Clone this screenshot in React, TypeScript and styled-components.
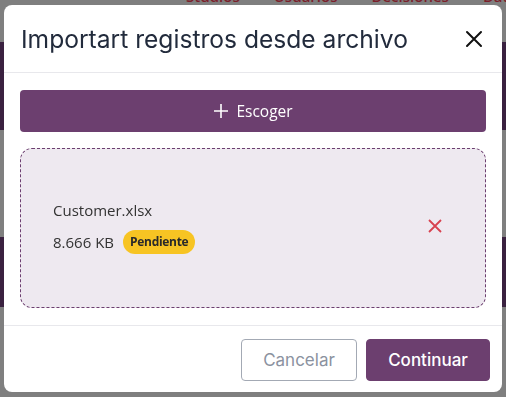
import React from 'react';
import styled, { createGlobalStyle } from 'styled-components';

const GlobalStyle = createGlobalStyle`
  html, body {
    margin: 0;
    padding: 0;
    background: #7f7f7f;
    overflow: hidden;
  }
  * { box-sizing: border-box; }
`;

const Page = styled.div`
  width: 506px;
  height: 397px;
  display: flex;
  flex-direction: column;
  background: #7f7f7f;
`;

const TopNav = styled.div`
  height: 42px;
  flex-shrink: 0;
  display: flex;
  align-items: flex-start;
  gap: 34px;
  padding-left: 186px;
  font-family: 'Open Sans', sans-serif;
  font-size: 15px;
  font-weight: 600;
  color: #7c1f2b;
  white-space: nowrap;
  overflow: hidden;
`;

const NavItem = styled.span`
  margin-top: -14px;
  line-height: 20px;
`;

const Band = styled.div<{ $h: number; $dark?: boolean }>`
  height: ${p => p.$h}px;
  flex-shrink: 0;
  background: ${p => (p.$dark ? '#3a2140' : '#7f7f7f')};
`;

const Modal = styled.div`
  position: fixed;
  top: 5px;
  left: 4px;
  width: 498px;
  height: 387px;
  background: #fff;
  border-radius: 8px;
  display: flex;
  flex-direction: column;
  overflow: hidden;
`;

const Header = styled.div`
  height: 68px;
  display: flex;
  align-items: center;
  justify-content: space-between;
  padding: 0 16px 0 17px;
  border-bottom: 1px solid #e8e8ec;
`;

const Title = styled.h2`
  margin: 0;
  font-family: Inter, sans-serif;
  font-weight: 400;
  font-size: 24.6px;
  color: #222b3c;
`;

const CloseButton = styled.button`
  border: none;
  background: none;
  padding: 0;
  width: 24px;
  height: 24px;
  display: flex;
  align-items: center;
  justify-content: center;
  cursor: pointer;
`;

const Body = styled.div`
  flex: 1;
  display: flex;
  flex-direction: column;
  gap: 16px;
  padding: 17px 16px;
  border-bottom: 1px solid #e8e8ec;
`;

const ChooseButton = styled.button`
  height: 42px;
  width: 100%;
  border: none;
  border-radius: 4px;
  background: #6c3f6f;
  color: #fff;
  display: flex;
  align-items: center;
  justify-content: center;
  gap: 7px;
  font-family: 'Open Sans', sans-serif;
  font-size: 15.5px;
  cursor: pointer;
`;

const DropZone = styled.div`
  flex: 1;
  border: 1px dashed #6c3f6f;
  border-radius: 12px;
  background: #eee9f0;
  display: flex;
  align-items: center;
  justify-content: space-between;
  padding: 0 40px 5px 32px;
`;

const FileInfo = styled.div`
  display: flex;
  flex-direction: column;
  gap: 8px;
  font-family: 'Open Sans', sans-serif;
  font-size: 15px;
  color: #333;
`;

const FileName = styled.div`
  line-height: 24px;
`;

const SizeRow = styled.div`
  display: flex;
  align-items: center;
  gap: 9px;
  line-height: 24px;
`;

const Badge = styled.span`
  display: inline-flex;
  align-items: center;
  height: 24px;
  padding: 0 7px;
  border-radius: 12px;
  background: #f7c423;
  color: #2a2a2a;
  font-family: 'Open Sans', sans-serif;
  font-weight: 700;
  font-size: 12px;
  letter-spacing: -0.3px;
`;

const RemoveButton = styled.button`
  border: none;
  background: none;
  padding: 0;
  width: 20px;
  height: 20px;
  display: flex;
  align-items: center;
  justify-content: center;
  cursor: pointer;
`;

const Footer = styled.div`
  height: 66px;
  display: flex;
  align-items: center;
  justify-content: flex-end;
  gap: 9px;
  padding: 1px 12px 0;
`;

const FooterButton = styled.button<{ $primary?: boolean }>`
  height: 42px;
  width: ${p => (p.$primary ? 124 : 116)}px;
  border-radius: 4px;
  border: 1px solid ${p => (p.$primary ? '#6c3f6f' : '#a3a9b4')};
  background: ${p => (p.$primary ? '#6c3f6f' : '#fff')};
  color: ${p => (p.$primary ? '#fff' : '#8b92a0')};
  font-family: Inter, sans-serif;
  font-weight: ${p => (p.$primary ? 500 : 400)};
  font-size: 17px;
  cursor: pointer;
`;

export default function App() {
  return (
    <>
      <GlobalStyle />
      <Page>
        <TopNav>
          <NavItem>Studios</NavItem>
          <NavItem>Usuarios</NavItem>
          <NavItem>Decisiones</NavItem>
          <NavItem>Datos</NavItem>
        </TopNav>
        <Band $h={88} $dark />
        <Band $h={107} />
        <Band $h={70} $dark />
        <Band $h={90} />
      </Page>
      <Modal>
        <Header>
          <Title>Importart registros desde archivo</Title>
          <CloseButton aria-label="Cerrar">
            <svg width="18" height="18" viewBox="0 0 18 18">
              <path d="M2 2 L16 16 M16 2 L2 16" stroke="#111" strokeWidth="2" strokeLinecap="round" />
            </svg>
          </CloseButton>
        </Header>
        <Body>
          <ChooseButton>
            <svg width="16" height="16" viewBox="0 0 16 16">
              <path d="M8 1 V15 M1 8 H15" stroke="#fff" strokeWidth="1.6" />
            </svg>
            Escoger
          </ChooseButton>
          <DropZone>
            <FileInfo>
              <FileName>Customer.xlsx</FileName>
              <SizeRow>
                8.666 KB
                <Badge>Pendiente</Badge>
              </SizeRow>
            </FileInfo>
            <RemoveButton aria-label="Eliminar">
              <svg width="14" height="14" viewBox="0 0 14 14">
                <path d="M1 1 L13 13 M13 1 L1 13" stroke="#d8414f" strokeWidth="1.8" />
              </svg>
            </RemoveButton>
          </DropZone>
        </Body>
        <Footer>
          <FooterButton>Cancelar</FooterButton>
          <FooterButton $primary>Continuar</FooterButton>
        </Footer>
      </Modal>
    </>
  );
}
